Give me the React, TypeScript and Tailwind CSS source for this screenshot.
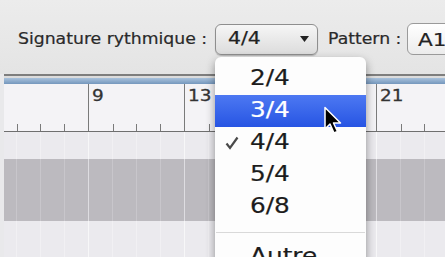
import React from "react";

const font = { fontFamily: '"DejaVu Sans", "Liberation Sans", sans-serif' };

function Band({ h, bg, tick, bar }: { h: string; bg: string; tick: string; bar: string }) {
  const cells = Array.from({ length: 20 }, (_, i) => i);
  return (
    <div className={`flex -ml-[12px] ${h} ${bg}`}>
      {cells.map((i) => (
        <div
          key={i}
          className={`w-[24px] shrink-0 h-full border-l ${i % 4 === 0 ? bar : tick}`}
        />
      ))}
    </div>
  );
}

export default function App() {
  const labels = ["", "9", "13", "17", "21"];
  return (
    <div className="w-[445px] h-[262px] overflow-hidden bg-white" style={font}>
      <div className="relative w-[445px] h-[257px] overflow-hidden bg-[#fbfbfb]">
        {/* toolbar */}
        <div className="h-[74px] bg-gradient-to-b from-[#ececec] to-[#e4e4e4] pt-[23px] pl-[18px]">
          <div className="flex items-center h-[32px]">
            <div className="w-[197px] shrink-0 text-[15px] text-[#2a2a2a] whitespace-nowrap [-webkit-text-stroke:0.2px_#2a2a2a]">
              <span className="inline-block origin-left scale-x-[1.15]">Signature rythmique :</span>
            </div>
            <div className="w-[103px] h-[31px] shrink-0 rounded-[6px] border border-[#8e8e8e] bg-gradient-to-b from-[#f6f6f6] to-[#dcdcdc] shadow-[0_1px_1px_rgba(0,0,0,0.2)] flex items-center pl-[12px] pr-[8px]">
              <span className="inline-block origin-left scale-x-[1.2] text-[17px] text-[#222] flex-1 [-webkit-text-stroke:0.2px_#222]">4/4</span>
              <svg width="9" height="6" viewBox="0 0 9 6">
                <polygon points="0,0 9,0 4.5,6" fill="#222" />
              </svg>
            </div>
            <div className="w-[89px] shrink-0 pl-[10px] text-[15px] text-[#2a2a2a] whitespace-nowrap [-webkit-text-stroke:0.2px_#2a2a2a]">
              <span className="inline-block origin-left scale-x-[1.15]">Pattern :</span>
            </div>
            <div className="w-[70px] h-[32px] shrink-0 rounded-[6px] border border-[#9a9a9a] bg-gradient-to-b from-[#ffffff] to-[#ececec] flex items-center pl-[10px]">
              <span className="inline-block origin-left scale-x-[1.2] text-[18px] text-[#222] [-webkit-text-stroke:0.2px_#222]">A1</span>
            </div>
          </div>
        </div>

        {/* timeline panel */}
        <div className="pl-[4px] bg-[#e9e9eb]">
          <div className="overflow-hidden">
            <div className="h-[2px] bg-[#7e7e7e]" />
            <div className="h-[2px] bg-[#dcdcdc]" />
            <div className="h-[6px] bg-gradient-to-b from-[#a9c2dc] to-[#7597bd]" />
            {/* ruler */}
            <div className="flex -ml-[12px] h-[48px] bg-[#f4f3f6] border-b border-[#6f6f6f]">
              {labels.map((l, j) => (
                <div key={j} className="w-[96px] shrink-0 h-full border-l border-[#7a7a7a] flex flex-col">
                  <div className="h-[40px] pt-[4px] pl-[3px] text-[16px] leading-[16px] text-[#333] [-webkit-text-stroke:0.3px_#333]">
                    <span className="inline-block origin-left scale-x-[1.15]">{l}</span>
                  </div>
                  <div className="flex flex-1">
                    <div className="w-[24px]" />
                    <div className="w-[24px] border-l border-[#7a7a7a]" />
                    <div className="w-[24px] border-l border-[#7a7a7a]" />
                    <div className="w-[24px] border-l border-[#7a7a7a]" />
                  </div>
                </div>
              ))}
            </div>
            <Band h="h-[27px]" bg="bg-[#ebeaee]" tick="border-[#f1f0f3]" bar="border-[#f7f7f8]" />
            <Band h="h-[62px]" bg="bg-[#bcbabf]" tick="border-[#c8c6cb]" bar="border-[#dedde1]" />
            <Band h="h-[36px]" bg="bg-[#ebeaee]" tick="border-[#f1f0f3]" bar="border-[#f7f7f8]" />
          </div>
        </div>

        {/* popup menu */}
        <div className="absolute left-[215px] top-[57px] w-[151px] h-[230px] bg-[#fdfdfd] rounded-t-[6px] shadow-[0_4px_10px_rgba(0,0,0,0.4)] pt-[6px] text-[21px] text-[#1c1c1c] [-webkit-text-stroke:0.2px_currentColor]">
          <div className="h-[32px] flex items-center pl-[35px]">
            <span className="inline-block origin-left scale-x-[1.18]">2/4</span>
          </div>
          <div className="h-[32px] flex items-center pl-[35px] bg-gradient-to-b from-[#4d78f2] to-[#2754e3] text-white">
            <span className="inline-block origin-left scale-x-[1.18]">3/4</span>
          </div>
          <div className="h-[32px] flex items-center pl-[10px]">
            <svg width="14" height="14" viewBox="0 0 14 14" className="mr-[11px]">
              <path d="M1.5 7.5 L5 12 L12.5 1.5" fill="none" stroke="#4a4a4a" strokeWidth="2.2" />
            </svg>
            <span className="inline-block origin-left scale-x-[1.18]">4/4</span>
          </div>
          <div className="h-[32px] flex items-center pl-[35px]">
            <span className="inline-block origin-left scale-x-[1.18]">5/4</span>
          </div>
          <div className="h-[32px] flex items-center pl-[35px]">
            <span className="inline-block origin-left scale-x-[1.18]">6/8</span>
          </div>
          <div className="h-[18px] flex items-center px-[1px]">
            <div className="h-[1px] w-full bg-[#d9d9d9]" />
          </div>
          <div className="h-[32px] flex items-center pl-[35px]">
            <span className="inline-block origin-left scale-x-[1.18]">Autre</span>
          </div>
        </div>

        {/* mouse cursor */}
        <svg className="absolute left-[323px] top-[106px]" width="20" height="30" viewBox="0 0 20 30">
          <path d="M2 1.5 L2 23 L7 18 L11 27 L14.5 25.5 L10.5 17 L17.5 17 Z" fill="#000" stroke="#fff" strokeWidth="1.5" strokeLinejoin="round" />
        </svg>
      </div>
    </div>
  );
}
